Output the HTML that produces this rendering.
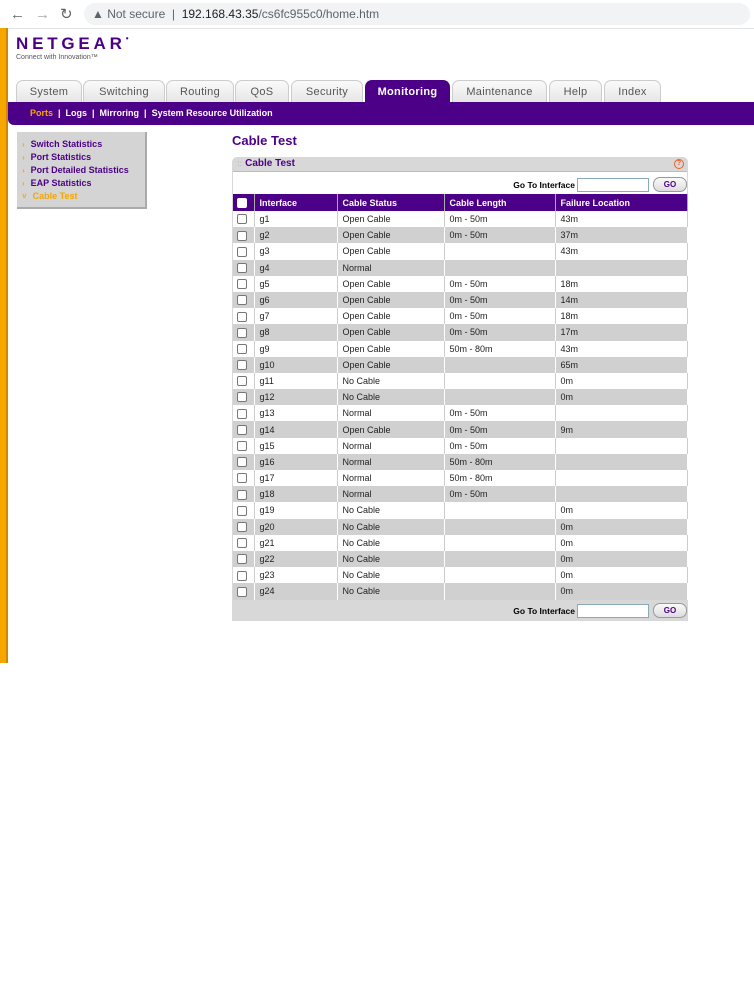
<!DOCTYPE html>
<html><head><meta charset="utf-8"><style>
*{margin:0;padding:0;box-sizing:border-box}
body{width:754px;height:999px;background:#fff;font-family:"Liberation Sans",sans-serif;position:relative;overflow:hidden}
.abs{position:absolute}
.pill{left:84px;top:3px;width:666px;height:22px;background:#f1f3f4;border-radius:11px}
.url{left:92px;top:7px;font-size:12px;color:#5f6368}
.strip{left:0;top:28px;width:8px;height:635px;background:#f7a600;border-right:2px solid #d08800}
.tab{top:80px;height:22px;background:linear-gradient(#fafafa,#e6e6e6);border:1px solid #ccc;border-bottom:none;border-radius:7px 7px 0 0;font-size:11px;color:#555;text-align:center;line-height:22px;letter-spacing:.3px}
.tab.on{background:#4b0087;color:#fff;font-weight:bold;border-color:#4b0087}
.bar{left:8px;top:102px;width:746px;height:23px;background:#4b0087;border-bottom-left-radius:6px}
.sub{left:30px;top:108px;font-size:9px;font-weight:bold;color:#fff}
.sub span.o{color:#f7a600}
.side{left:17px;top:132px;width:130px;height:77px;background:#d4d4d4;border-right:2px solid #aaa;border-bottom:2px solid #aaa;padding:7px 0 0 5px}
.side div{font-size:9px;font-weight:bold;color:#4b0087;height:13px}
.side div b{color:#f7a600;font-size:8px;margin-right:6px}
table{border-collapse:collapse;font-size:9px;width:455px}
td{height:16.2px;padding:0 0 0 5px;border-right:1px solid #fff;color:#222;background:#fff;border-right-color:#ccc}
tr:nth-child(odd) td{background:#d0d0d0;border-right-color:#fff}
th{height:17px;background:#4b0087;color:#fff;text-align:left;padding-left:5px;font-size:9px;border-right:1px solid #aaa}
.cb{display:inline-block;width:10px;height:10px;border:1px solid #777;border-radius:2px;background:#fff;vertical-align:middle}
.go{display:inline-block;width:34px;height:15px;border:1px solid #999;border-radius:7px;background:linear-gradient(#fafafa,#ddd);color:#4b0087;font-size:8px;font-weight:bold;text-align:center;line-height:13px;vertical-align:middle}
.inp{display:inline-block;width:72px;height:14px;border:1px solid #8ab;background:#fff;vertical-align:middle;margin-right:4px}
.gt{font-size:8.5px;font-weight:bold;vertical-align:middle;margin-right:2px}
</style></head><body>
<div class="abs" style="left:10px;top:6px;font-size:15px;color:#5f6368">←</div>
<div class="abs" style="left:35px;top:6px;font-size:15px;color:#aaa">→</div>
<div class="abs" style="left:60px;top:5px;font-size:15px;color:#5f6368">↻</div>
<div class="abs pill"></div>
<div class="abs url">▲ Not secure &nbsp;| &nbsp;<span style="color:#202124">192.168.43.35</span>/cs6fc955c0/home.htm</div>
<div class="abs" style="left:0;top:28px;width:754px;height:1px;background:#e3e3e3"></div>
<div class="abs strip"></div>
<div class="abs" style="left:16px;top:34px;font-size:17px;font-weight:bold;color:#4b0087;letter-spacing:3.8px">NETGEAR<span style="font-size:8px;vertical-align:top">•</span></div>
<div class="abs" style="left:16px;top:54px;font-size:7px;color:#555">Connect with Innovation™</div>
<div class="abs tab" style="left:16px;width:66px">System</div>
<div class="abs tab" style="left:83px;width:82px">Switching</div>
<div class="abs tab" style="left:166px;width:68px">Routing</div>
<div class="abs tab" style="left:235px;width:54px">QoS</div>
<div class="abs tab" style="left:291px;width:72px">Security</div>
<div class="abs tab on" style="left:365px;width:85px">Monitoring</div>
<div class="abs tab" style="left:452px;width:95px">Maintenance</div>
<div class="abs tab" style="left:549px;width:53px">Help</div>
<div class="abs tab" style="left:604px;width:57px">Index</div>
<div class="abs bar"></div>
<div class="abs sub"><span class="o">Ports</span> &nbsp;| &nbsp;Logs &nbsp;| &nbsp;Mirroring &nbsp;| &nbsp;System Resource Utilization</div>
<div class="abs side">
<div><b>›</b>Switch Statistics</div><div><b>›</b>Port Statistics</div><div><b>›</b>Port Detailed Statistics</div><div><b>›</b>EAP Statistics</div><div style="color:#f7a600"><b>˅</b>Cable Test</div>
</div>
<div class="abs" style="left:232px;top:133px;font-size:13px;font-weight:bold;color:#4b0087">Cable Test</div>
<div class="abs" style="left:232px;top:157px;width:456px;height:464px;background:#d8d8d8;border-radius:5px 5px 0 0"></div>
<div class="abs" style="left:233px;top:171px;width:454px;height:23px;background:#fff;border-top:1px solid #bbb"></div>
<div class="abs" style="left:237px;top:158px;font-size:10px;font-weight:bold;color:#4b0087"><span style="color:#bbb;font-size:8px">::</span> Cable Test</div>
<div class="abs" style="left:674px;top:159px;width:10px;height:10px;border-radius:50%;border:1px solid #f06020;color:#f06020;font-size:7px;font-weight:bold;text-align:center;line-height:8px">?</div>
<div class="abs" style="right:67px;top:176px"><span class="gt">Go To Interface</span><span class="inp"></span><span class="go">GO</span></div>
<div class="abs" style="left:233px;top:194px">
<table>
<tr><th style="width:21px;padding-left:4px"><span class="cb" style="border-color:#fff"></span></th><th style="width:83px">Interface</th><th style="width:107px">Cable Status</th><th style="width:111px">Cable Length</th><th>Failure Location</th></tr>
<tr><td style="padding-left:4px"><span class="cb"></span></td><td>g1</td><td>Open Cable</td><td>0m - 50m</td><td>43m</td></tr>
<tr><td style="padding-left:4px"><span class="cb"></span></td><td>g2</td><td>Open Cable</td><td>0m - 50m</td><td>37m</td></tr>
<tr><td style="padding-left:4px"><span class="cb"></span></td><td>g3</td><td>Open Cable</td><td></td><td>43m</td></tr>
<tr><td style="padding-left:4px"><span class="cb"></span></td><td>g4</td><td>Normal</td><td></td><td></td></tr>
<tr><td style="padding-left:4px"><span class="cb"></span></td><td>g5</td><td>Open Cable</td><td>0m - 50m</td><td>18m</td></tr>
<tr><td style="padding-left:4px"><span class="cb"></span></td><td>g6</td><td>Open Cable</td><td>0m - 50m</td><td>14m</td></tr>
<tr><td style="padding-left:4px"><span class="cb"></span></td><td>g7</td><td>Open Cable</td><td>0m - 50m</td><td>18m</td></tr>
<tr><td style="padding-left:4px"><span class="cb"></span></td><td>g8</td><td>Open Cable</td><td>0m - 50m</td><td>17m</td></tr>
<tr><td style="padding-left:4px"><span class="cb"></span></td><td>g9</td><td>Open Cable</td><td>50m - 80m</td><td>43m</td></tr>
<tr><td style="padding-left:4px"><span class="cb"></span></td><td>g10</td><td>Open Cable</td><td></td><td>65m</td></tr>
<tr><td style="padding-left:4px"><span class="cb"></span></td><td>g11</td><td>No Cable</td><td></td><td>0m</td></tr>
<tr><td style="padding-left:4px"><span class="cb"></span></td><td>g12</td><td>No Cable</td><td></td><td>0m</td></tr>
<tr><td style="padding-left:4px"><span class="cb"></span></td><td>g13</td><td>Normal</td><td>0m - 50m</td><td></td></tr>
<tr><td style="padding-left:4px"><span class="cb"></span></td><td>g14</td><td>Open Cable</td><td>0m - 50m</td><td>9m</td></tr>
<tr><td style="padding-left:4px"><span class="cb"></span></td><td>g15</td><td>Normal</td><td>0m - 50m</td><td></td></tr>
<tr><td style="padding-left:4px"><span class="cb"></span></td><td>g16</td><td>Normal</td><td>50m - 80m</td><td></td></tr>
<tr><td style="padding-left:4px"><span class="cb"></span></td><td>g17</td><td>Normal</td><td>50m - 80m</td><td></td></tr>
<tr><td style="padding-left:4px"><span class="cb"></span></td><td>g18</td><td>Normal</td><td>0m - 50m</td><td></td></tr>
<tr><td style="padding-left:4px"><span class="cb"></span></td><td>g19</td><td>No Cable</td><td></td><td>0m</td></tr>
<tr><td style="padding-left:4px"><span class="cb"></span></td><td>g20</td><td>No Cable</td><td></td><td>0m</td></tr>
<tr><td style="padding-left:4px"><span class="cb"></span></td><td>g21</td><td>No Cable</td><td></td><td>0m</td></tr>
<tr><td style="padding-left:4px"><span class="cb"></span></td><td>g22</td><td>No Cable</td><td></td><td>0m</td></tr>
<tr><td style="padding-left:4px"><span class="cb"></span></td><td>g23</td><td>No Cable</td><td></td><td>0m</td></tr>
<tr><td style="padding-left:4px"><span class="cb"></span></td><td>g24</td><td>No Cable</td><td></td><td>0m</td></tr>
</table>
</div>
<div class="abs" style="right:67px;top:602px"><span class="gt">Go To Interface</span><span class="inp"></span><span class="go">GO</span></div>
</body></html>
